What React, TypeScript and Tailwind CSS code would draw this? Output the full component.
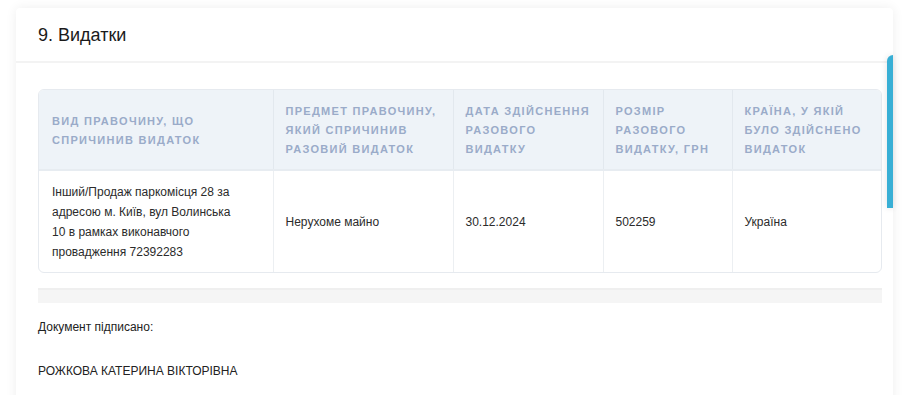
import React from "react";

const headers = [
  "Вид правочину, що спричинив видаток",
  "Предмет правочину, який спричинив разовий видаток",
  "Дата здійснення разового видатку",
  "Розмір разового видатку, грн",
  "Країна, у якій було здійснено видаток",
];

const row = [
  "Інший/Продаж паркомісця 28 за адресою м. Київ, вул Волинська 10 в рамках виконавчого провадження 72392283",
  "Нерухоме майно",
  "30.12.2024",
  "502259",
  "Україна",
];

const widths = ["w-[234px]", "w-[180px]", "w-[150px]", "w-[129px]", "w-[151px]"];

export default function App() {
  return (
    <div className="relative w-[920px] h-[395px] overflow-hidden bg-white font-['Liberation_Sans',Arial,sans-serif]">
      <div className="ml-4 mt-2 w-[877px] h-[420px] bg-white rounded-sm shadow-[0_0_12px_rgba(0,0,0,0.07)]">
        <div className="h-[55px] flex items-center pl-[22px] border-b-2 border-[#f3f3f3]">
          <h2 className="text-[18px] text-[#1a1a1a] leading-none">9. Видатки</h2>
        </div>
        <div className="pl-[22px] pr-[11px] pt-[26px]">
          <div className="w-[844px] border border-[#e6eaef] rounded-md overflow-hidden">
            <table className="w-full table-fixed border-collapse">
              <thead>
                <tr className="bg-[#eef3f8] h-[80px] border-b-2 border-[#e7ecf1]">
                  {headers.map((h, i) => (
                    <th
                      key={i}
                      className={`${widths[i]} ${i > 0 ? "border-l border-[#e2e8ee]" : ""} ${i === 0 ? "pl-[13px]" : "pl-3"} pr-2 pt-[2px] text-left align-middle uppercase font-bold text-[11px] leading-[19px] tracking-[1.3px] text-[#9aabc9]`}
                    >
                      {h}
                    </th>
                  ))}
                </tr>
              </thead>
              <tbody>
                <tr className="h-[102px]">
                  {row.map((c, i) => (
                    <td
                      key={i}
                      className={`${i > 0 ? "border-l border-[#eceff2] pr-3" : "pr-[32px]"} ${i === 0 ? "pl-[13px]" : "pl-3"} align-middle text-[12px] leading-[20px] text-[#2b2b2b]`}
                    >
                      {c}
                    </td>
                  ))}
                </tr>
              </tbody>
            </table>
          </div>
          <div className="mt-[15px] w-[844px] h-[15px] bg-[#f5f5f5] border-t-2 border-[#efefef]" />
          <p className="mt-[16px] text-[12px] leading-[16px] text-[#222]">Документ підписано:</p>
          <p className="mt-[28px] text-[12px] leading-[16px] text-[#222]">РОЖКОВА КАТЕРИНА ВІКТОРІВНА</p>
        </div>
      </div>
      <div className="absolute left-[887px] top-[55px] w-[6px] h-[153px] bg-[#38afd5] rounded-tl-md shadow-[0_0_6px_rgba(0,0,0,0.12)]" />
    </div>
  );
}
